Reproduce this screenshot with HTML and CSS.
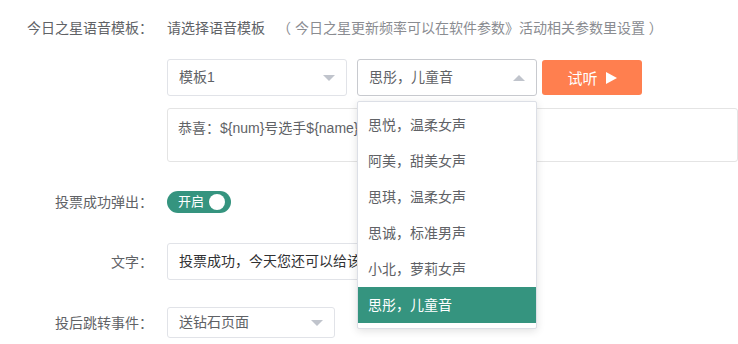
FILE: index.html
```html
<!DOCTYPE html>
<html lang="zh-CN">
<head>
    <meta charset="UTF-8">
    <meta name="viewport" content="width=device-width, initial-scale=1.0">
    <link rel="stylesheet" href="styles.css">
</head>
<body>

<div class="form">
    <div class="row row-title">
        <label class="label">今日之星语音模板：</label>
        <div class="field">
            <span class="tip">请选择语音模板</span>
            <span class="hint">（ 今日之星更新频率可以在软件参数》活动相关参数里设置 ）</span>
        </div>
    </div>

    <div class="row row-voice">
        <label class="label"></label>
        <div class="field voice-controls">
            <div class="select select-180">模板1<i class="arrow"></i></div>
            <div class="select-wrap">
                <div class="select select-180 is-open">思彤，儿童音<i class="arrow arrow-up"></i></div>
                <ul class="dropdown">
                    <li>思悦，温柔女声</li>
                    <li>阿美，甜美女声</li>
                    <li>思琪，温柔女声</li>
                    <li>思诚，标准男声</li>
                    <li>小北，萝莉女声</li>
                    <li class="selected">思彤，儿童音</li>
                </ul>
            </div>
            <button class="btn-listen">试听
                <svg class="play" width="11" height="12" viewBox="0 0 11 12"><path d="M0 0 L11 6 L0 12 Z" fill="#fff"/></svg>
            </button>
        </div>
    </div>

    <div class="row row-text">
        <label class="label"></label>
        <div class="field">
            <div class="textarea">恭喜：${num}号选手${name}成为今日之星</div>
        </div>
    </div>

    <div class="row row-switch">
        <label class="label">投票成功弹出：</label>
        <div class="field">
            <span class="switch"><span class="switch-text">开启</span><span class="switch-knob"></span></span>
        </div>
    </div>

    <div class="row row-input">
        <label class="label">文字：</label>
        <div class="field">
            <div class="input">投票成功，今天您还可以给该选手投票哦</div>
        </div>
    </div>

    <div class="row row-jump">
        <label class="label">投后跳转事件：</label>
        <div class="field">
            <div class="select select-small">送钻石页面<i class="arrow"></i></div>
        </div>
    </div>
</div>

</body>
</html>
```

FILE: styles.css
```css
body {
    margin: 0;
    padding: 0;
    background: #fff;
    font-family: "Liberation Sans", "Noto Sans CJK SC", sans-serif;
    font-size: 14px;
    color: #606266;
    overflow: hidden;
}
.form {
    width: 738px;
}
.row {
    display: flex;
    align-items: center;
}
.label {
    width: 153px;
    margin-right: 14px;
    flex-shrink: 0;
    text-align: right;
    color: #606266;
    line-height: 20px;
}
.field {
    flex: 1;
    display: flex;
    align-items: center;
}
.row-title {
    margin-top: 18px;
    line-height: 20px;
}
.tip {
    color: #606266;
}
.hint {
    margin-left: 12px;
    color: #8a8c91;
}
.row-voice {
    margin-top: 21px;
    align-items: flex-start;
}
.voice-controls {
    align-items: flex-start;
}
.select {
    position: relative;
    box-sizing: border-box;
    height: 37px;
    line-height: 35px;
    padding-left: 11px;
    border: 1px solid #e1e3e8;
    border-radius: 3px;
    color: #606266;
    background: #fff;
}
.select-180 {
    width: 180px;
}
.select-wrap {
    position: relative;
    margin-left: 10px;
}
.is-open {
    border-color: #c8cacf;
}
.arrow {
    position: absolute;
    right: 11px;
    top: 15px;
    width: 0;
    height: 0;
    border-left: 6px solid transparent;
    border-right: 6px solid transparent;
    border-top: 6px solid #c0c4cc;
}
.arrow-up {
    border-top: none;
    border-bottom: 6px solid #c0c4cc;
}
.dropdown {
    position: absolute;
    top: 42px;
    left: 0;
    z-index: 10;
    box-sizing: border-box;
    width: 180px;
    margin: 0;
    padding: 5px 0;
    list-style: none;
    background: #fff;
    border: 1px solid #dcdfe6;
    border-radius: 2px;
    box-shadow: 0 2px 8px rgba(0, 0, 0, 0.12);
}
.dropdown li {
    height: 36px;
    line-height: 36px;
    padding-left: 10px;
    color: #606266;
}
.dropdown li.selected {
    background: #35947f;
    color: #fff;
}
.btn-listen {
    display: flex;
    align-items: center;
    justify-content: center;
    gap: 8px;
    width: 100px;
    height: 35px;
    margin-top: 1px;
    margin-left: 5px;
    border: none;
    border-radius: 3px;
    background: #ff7f4f;
    color: #fff;
    font-family: inherit;
    font-size: 15px;
    cursor: pointer;
}
.row-text {
    margin-top: 12px;
}
.textarea {
    box-sizing: border-box;
    width: 571px;
    height: 54px;
    padding: 9px 10px;
    line-height: 20px;
    border: 1px solid #e4e4e4;
    border-radius: 3px;
    color: #606266;
    white-space: nowrap;
    overflow: hidden;
}
.row-switch {
    margin-top: 29px;
}
.switch {
    position: relative;
    display: inline-flex;
    align-items: center;
    width: 64px;
    height: 22px;
    border-radius: 11px;
    background: #35947f;
}
.switch-text {
    margin-left: 11px;
    color: #fff;
    font-size: 13px;
    line-height: 22px;
}
.switch-knob {
    position: absolute;
    right: 6px;
    top: 3px;
    width: 16px;
    height: 16px;
    border-radius: 50%;
    background: #fff;
}
.row-input {
    margin-top: 30px;
}
.input {
    box-sizing: border-box;
    width: 360px;
    height: 37px;
    line-height: 35px;
    padding-left: 11px;
    border: 1px solid #e1e3e8;
    border-radius: 3px;
    color: #303133;
    white-space: nowrap;
    overflow: hidden;
}
.row-jump {
    margin-top: 27px;
}
.select-small {
    width: 168px;
    height: 31px;
    line-height: 29px;
}
.select-small .arrow {
    top: 12px;
}
```
